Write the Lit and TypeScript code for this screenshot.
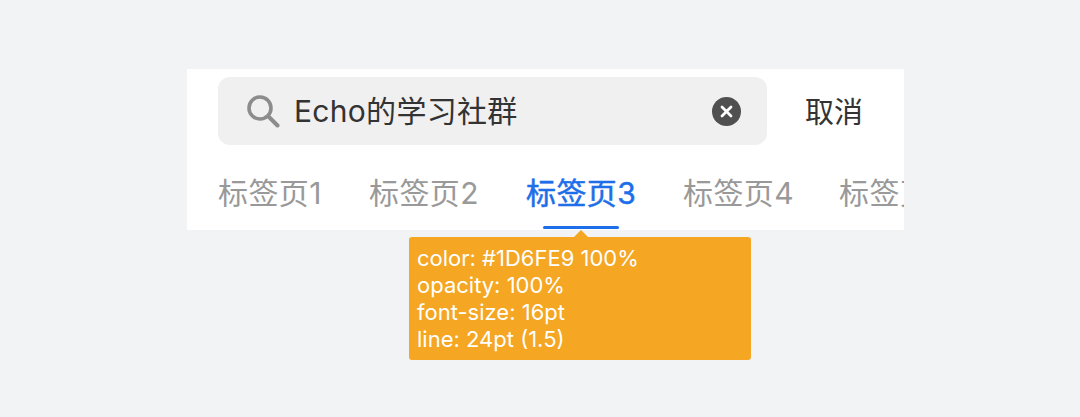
import { LitElement, html, css } from "lit";
import { customElement } from "lit/decorators.js";

@customElement("app-root")
export class AppRoot extends LitElement {
  static styles = css`
    :host {
      display: block;
      height: 417px;
      overflow: hidden;
      background: #f2f3f5;
      font-family: Inter, "Noto Sans CJK SC", sans-serif;
      padding-top: 69px;
      box-sizing: border-box;
    }
    .panel {
      margin-left: 187px;
      width: 717px;
      height: 161px;
      background: #fff;
      padding: 8px 0 0 31px;
      box-sizing: border-box;
      overflow: hidden;
    }
    .search-row {
      display: flex;
      align-items: center;
      height: 68px;
    }
    .search {
      width: 549px;
      height: 68px;
      flex: none;
      box-sizing: border-box;
      background: #f0f0f0;
      border-radius: 12px;
      display: flex;
      align-items: center;
      padding: 0 26px 0 28px;
    }
    .search-icon { flex: none; margin-right: 14px; }
    .query {
      flex: 1;
      font-size: 30px;
      letter-spacing: 0.3px;
      line-height: 38px;
      color: #333;
      white-space: nowrap;
    }
    .cancel {
      margin: 3px 0 0 38px;
      font-size: 29px;
      line-height: 38px;
      color: #333;
      white-space: nowrap;
    }
    .tabs {
      display: grid;
      grid-template-columns: 151px 157px 157px 156px 180px;
      margin-top: 29px;
      height: 56px;
    }
    .tab {
      position: relative;
      font-size: 30px;
      letter-spacing: 0.4px;
      line-height: 38px;
      color: #999;
      white-space: nowrap;
    }
    .tab.active {
      color: #1d6fe9;
      -webkit-text-stroke: 0.5px #1d6fe9;
    }
    .tab.active::after {
      content: "";
      position: absolute;
      left: 17px;
      width: 76px;
      top: 52px;
      height: 3px;
      border-radius: 2px;
      background: #1d6fe9;
    }
    .note {
      position: relative;
      margin: 7px 0 0 409px;
      width: 342px;
      height: 123px;
      box-sizing: border-box;
      padding: 8px 8px;
      background: #f5a623;
      border-radius: 3px;
      color: #fff;
      font-size: 22px;
      line-height: 27px;
    }
    .note::before {
      content: "";
      position: absolute;
      left: 165px;
      top: -7px;
      border-left: 7px solid transparent;
      border-right: 7px solid transparent;
      border-bottom: 7px solid #f5a623;
    }
    .note div { white-space: nowrap; }
  `;

  render() {
    const tabs = ["标签页1", "标签页2", "标签页3", "标签页4", "标签页5"];
    return html`
      <div class="panel">
        <div class="search-row">
          <div class="search">
            <svg class="search-icon" width="34" height="34" viewBox="0 0 34 34" fill="none" stroke="#8c8c8c" stroke-linecap="round">
              <circle cx="14" cy="14" r="11" stroke-width="3.6"></circle>
              <path d="M22.5 22.5 L31.5 31.5" stroke-width="4"></path>
            </svg>
            <div class="query">Echo的学习社群</div>
            <svg width="29" height="29" viewBox="0 0 29 29">
              <circle cx="14.5" cy="14.5" r="14.5" fill="#505050"></circle>
              <path d="M10 10 L19 19 M19 10 L10 19" stroke="#fff" stroke-width="2.8" stroke-linecap="round"></path>
            </svg>
          </div>
          <div class="cancel">取消</div>
        </div>
        <div class="tabs">
          ${tabs.map((t, i) => html`<div class="tab ${i === 2 ? "active" : ""}">${t}</div>`)}
        </div>
      </div>
      <div class="note">
        <div>color: #1D6FE9 100%</div>
        <div>opacity: 100%</div>
        <div>font-size: 16pt</div>
        <div>line: 24pt (1.5)</div>
      </div>
    `;
  }
}
